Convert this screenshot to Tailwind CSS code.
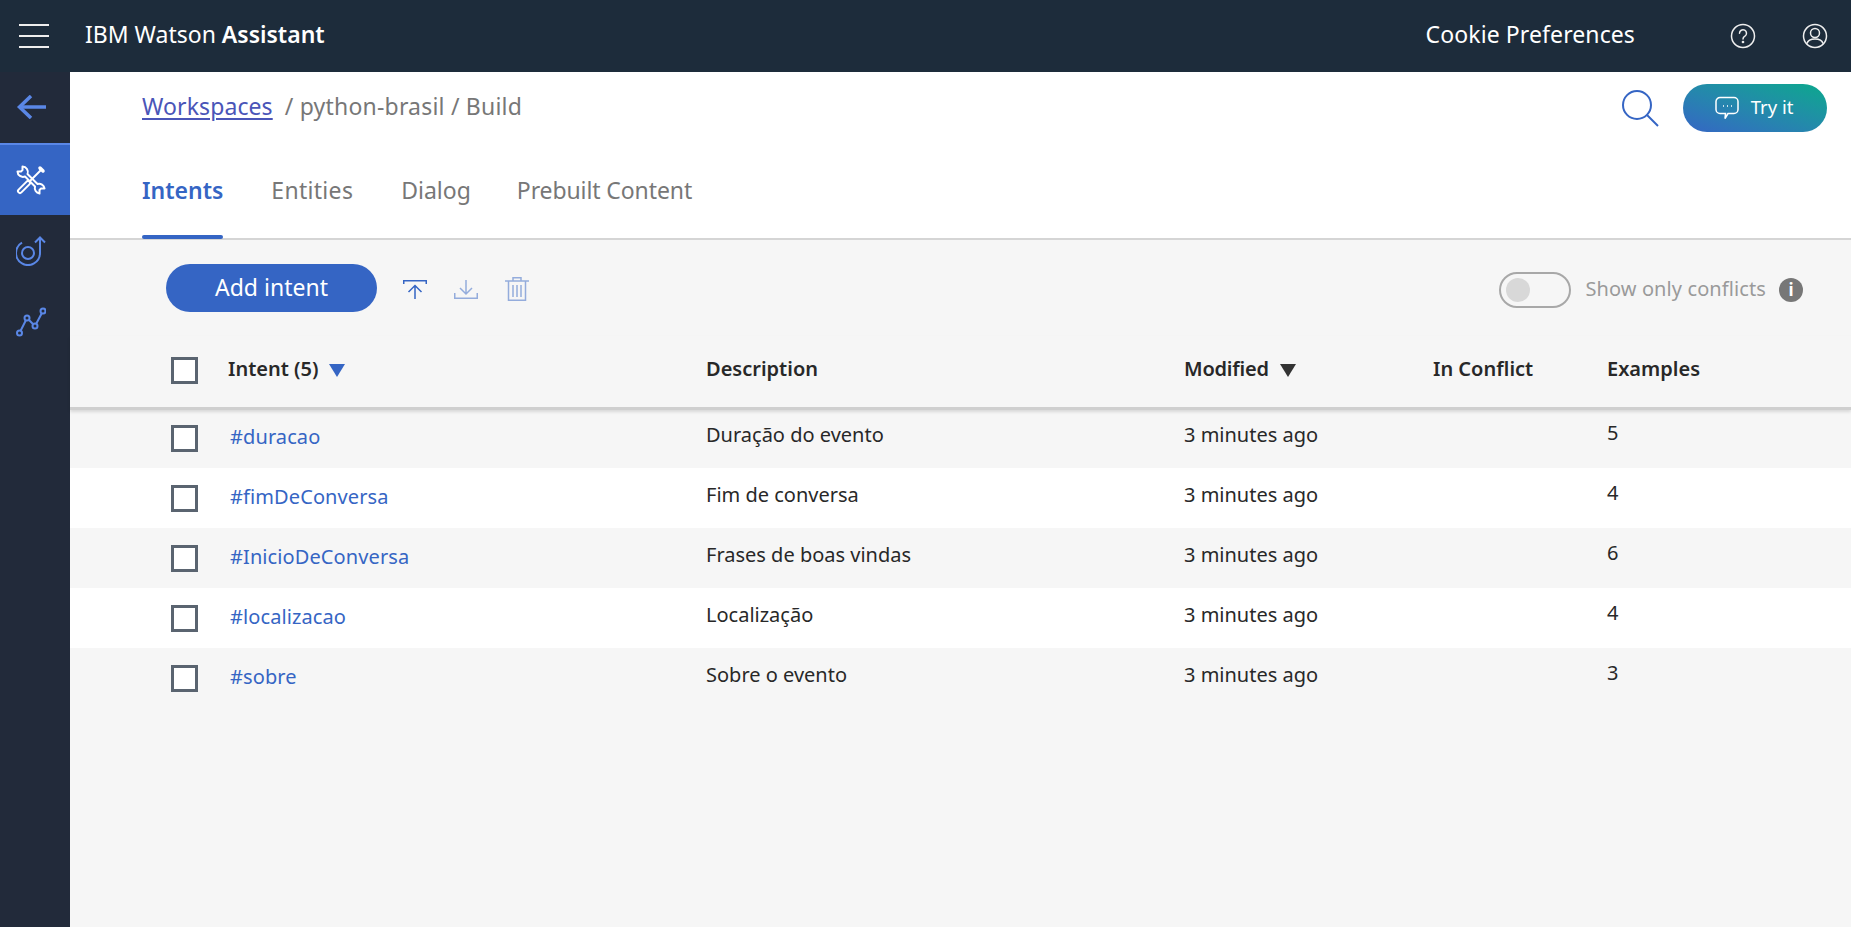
<!DOCTYPE html>
<html lang="en">
<head>
    <meta charset="UTF-8">
    <title>IBM Watson Assistant</title>
    <script src="https://cdn.jsdelivr.net/npm/@tailwindcss/browser@4"></script>
</head>
<body class="h-[927px] overflow-hidden flex flex-col bg-[#f6f6f6] font-['Noto_Sans',sans-serif] text-[#282828]">
    <!-- top bar -->
    <header class="h-[72px] shrink-0 bg-[#1d2c3b] flex items-center text-white">
        <div class="w-[85px] pl-[19px]">
            <div class="w-[30px] flex flex-col gap-[9px]">
                <div class="h-[2px] bg-[#eee]"></div>
                <div class="h-[2px] bg-[#eee]"></div>
                <div class="h-[2px] bg-[#eee]"></div>
            </div>
        </div>
        <div class="text-[23px] mb-[4px]">IBM Watson <span class="font-semibold">Assistant</span></div>
        <div class="ml-auto text-[23px] tracking-[0.1px] mr-[95px] mb-[3px]">Cookie Preferences</div>
        <svg class="w-[26px] h-[26px] mr-[46px]" viewBox="0 0 26 26" fill="none" stroke="#eee" stroke-width="1.5">
            <circle cx="13" cy="13" r="11.5"/>
            <path d="M9.5 10.2a3.5 3.5 0 1 1 5.4 3c-1.3.8-1.9 1.5-1.9 2.8" stroke-linecap="round"/>
            <circle cx="13" cy="19" r="0.6" fill="#eee"/>
        </svg>
        <svg class="w-[26px] h-[26px] mr-[23px]" viewBox="0 0 26 26" fill="none" stroke="#eee" stroke-width="1.5">
            <circle cx="13" cy="13" r="11.5"/>
            <circle cx="13" cy="10" r="4.5"/>
            <path d="M5 20.5c1-3.6 4-4.5 8-4.5s7 .9 8 4.5"/>
        </svg>
    </header>

    <div class="flex flex-1 min-h-0">
        <!-- side nav -->
        <aside class="w-[70px] shrink-0 bg-[#222a3a] flex flex-col">
            <div class="h-[71px] flex items-center justify-center pr-[8px] pb-[1px]">
                <svg class="w-[30px] h-[24px]" viewBox="0 0 30 24" fill="none" stroke="#5a87e6" stroke-width="3.500">
                    <path d="M30 12H3"/>
                    <path d="M15 1L3.500 12 15 23"/>
                </svg>
            </div>
            <div class="h-[72px] bg-[#3565c4] border-t-2 border-[#5a87e6] flex items-center justify-center pr-[8px]">
                <svg class="w-[30px] h-[30px]" viewBox="0 0 30 30" fill="none" stroke="#fff" stroke-width="2">
                    <path d="M6.500 1.500L6.500 5 5 6.500 1.500 6.500A5.500 5.500 0 0 0 9 11.500L19 21.500A5.500 5.500 0 0 0 23.500 28.500L23.500 25 25 23.500 28.500 23.500A5.500 5.500 0 0 0 21.500 19L11.500 9A5.500 5.500 0 0 0 6.500 1.500z" stroke-linejoin="round"/>
                    <path d="M4 26L12 18" stroke-width="6" stroke-linecap="round"/>
                    <path d="M4 26L12 18" stroke="#3565c4" stroke-width="2" stroke-linecap="round"/>
                    <path d="M13 17L25 5"/>
                    <path d="M24 3L27 6" stroke-width="3.500" stroke-linecap="round"/>
                </svg>
            </div>
            <div class="h-[72px] flex items-center justify-center pr-[8px]">
                <svg class="w-[30px] h-[30px]" viewBox="0 0 30 30" fill="none" stroke="#5a87e6" stroke-width="2">
                    <circle cx="12" cy="17" r="6"/>
                    <path d="M6 6.600A12 12 0 1 0 24 17V2"/>
                    <path d="M19 6.500L24 1.500 29 6.500"/>
                </svg>
            </div>
            <div class="h-[70px] flex items-center justify-center pr-[8px]">
                <svg class="w-[30px] h-[30px]" viewBox="0 0 30 30" fill="none" stroke="#5a87e6" stroke-width="2">
                    <circle cx="3.500" cy="26" r="2.500"/>
                    <circle cx="11" cy="11" r="2.500"/>
                    <circle cx="19" cy="19" r="2.500"/>
                    <circle cx="27" cy="4" r="2.500"/>
                    <path d="M4.600 23.800L9.900 13.200M12.800 12.800L17.200 17.200M20.200 16.800L25.800 6.200"/>
                </svg>
            </div>
        </aside>

        <main class="flex-1 min-w-0 flex flex-col">
            <!-- breadcrumb + tabs -->
            <div class="h-[168px] shrink-0 bg-white border-b-2 border-[#d5d5d5] relative pl-[72px]">
                <div class="h-[72px] flex items-center text-[23px] text-[#777]">
                    <a class="text-[#4a55b8] tracking-[0.1px] underline underline-offset-[3px] mb-[3px]">Workspaces</a>
                    <span class="ml-[12px] tracking-[0.2px] mb-[3px]">/ python-brasil / Build</span>
                    <svg class="ml-auto w-[38px] h-[38px] mr-[24px]" viewBox="0 0 38 38" fill="none" stroke="#3565c4" stroke-width="2">
                        <circle cx="16" cy="16" r="14"/>
                        <path d="M26 26l11 11"/>
                    </svg>
                    <button class="w-[144px] h-[48px] mr-[24px] rounded-full bg-gradient-to-tr from-[#3565c4] to-[#0aa88c] text-white text-[18.5px] flex items-center justify-center gap-[12px]">
                        <svg class="w-[24px] h-[24px] -ml-[2px]" viewBox="0 0 24 24" fill="none" stroke="#fff" stroke-width="1.500">
                            <path d="M5 1.500h14a4 4 0 0 1 4 4v8a4 4 0 0 1-4 4h-6l-3 5 .500-5H5a4 4 0 0 1-4-4v-8a4 4 0 0 1 4-4z"/>
                            <path d="M8 10h1M12 10h1M16 10h1"/>
                        </svg>
                        <span class="mb-[3px]">Try it</span>
                    </button>
                </div>
                <nav class="flex gap-[48px] text-[23px] text-[#777] absolute left-[72px] bottom-0">
                    <div class="h-[96px] pt-[31px] relative text-[#3565c4] font-semibold">Intents
                        <div class="absolute left-0 right-0 bottom-[-1px] h-[4px] rounded-full bg-[#3565c4]"></div>
                    </div>
                    <div class="h-[96px] pt-[31px] tracking-[0.3px]">Entities</div>
                    <div class="h-[96px] pt-[31px]">Dialog</div>
                    <div class="h-[96px] pt-[31px] -ml-[2px] tracking-[-0.1px]">Prebuilt Content</div>
                </nav>
            </div>

            <!-- toolbar -->
            <div class="h-[96px] shrink-0 flex items-center pl-[96px] pr-[48px]">
                <button class="w-[211px] h-[48px] rounded-full bg-[#3565c4] text-white text-[23px]"><span class="block mb-[2px]">Add intent</span></button>
                <svg class="w-[24px] h-[19px] ml-[26px] mt-[3px]" viewBox="0 0 24 19" fill="none" stroke="#3565c4" stroke-width="1.500">
                    <path d="M.75 4V.75h22.500V4"/><path d="M12 19V6M5.500 12l6.500-6.500 6.500 6.500"/>
                </svg>
                <svg class="w-[24px] h-[19px] ml-[27px] mt-[3px] opacity-50" viewBox="0 0 24 19" fill="none" stroke="#3565c4" stroke-width="1.500">
                    <path d="M.75 13v5.250h22.500V13"/><path d="M12 0v13M6 8l6 6 6-6"/>
                </svg>
                <svg class="w-[24px] h-[24px] ml-[27px] mt-[2px] opacity-50" viewBox="0 0 24 24" fill="none" stroke="#3565c4" stroke-width="1.500">
                    <path d="M0 4h24M8 4V.75h8V4M3.500 4v19.250h17V4M8 8v12M12 8v12M16 8v12"/>
                </svg>
                <div class="ml-auto w-[72px] h-[36px] mt-[4px] rounded-full border-2 border-[#a8a8a8] flex items-center pl-[5px]">
                    <div class="w-[24px] h-[24px] rounded-full bg-[#d8d8d8]"></div>
                </div>
                <span class="ml-[14px] mt-[1px] text-[20px] tracking-[0.1px] text-[#9a9a9a]">Show only conflicts</span>
                <span class="ml-[13px] mt-[4px] w-[24px] h-[24px] rounded-full bg-[#777] text-white text-[17px] font-bold flex items-center justify-center">i</span>
            </div>

            <!-- table head -->
            <div class="h-[74px] pb-[2px] shrink-0 flex items-center text-[20px] font-semibold border-b-[3px] border-[#cfcfcf] shadow-[0_2px_3px_rgba(0,0,0,0.12)] relative">
                <div class="w-[158px] pl-[101px]"><div class="w-[27px] h-[27px] border-[3px] border-[#5a6470] bg-white"></div></div>
                <div class="w-[478px] flex items-center gap-[11px]"><span class="mb-[4px]">Intent (5)</span>
                    <div class="w-0 h-0 border-x-[8px] border-x-transparent border-t-[13px] border-t-[#3565c4]"></div>
                </div>
                <div class="w-[478px] mb-[4px]">Description</div>
                <div class="w-[249px] flex items-center gap-[11px]"><span class="mb-[4px] tracking-[-0.2px]">Modified</span>
                    <div class="w-0 h-0 border-x-[8px] border-x-transparent border-t-[13px] border-t-[#333]"></div>
                </div>
                <div class="w-[174px] mb-[4px]">In Conflict</div>
                <div class="mb-[4px]">Examples</div>
            </div>

            <!-- rows -->
            <div class="flex flex-col text-[20px] -mt-[2px]">
                <div class="h-[60px] flex items-center">
                    <div class="w-[160px] pl-[101px]"><div class="w-[27px] h-[27px] border-[3px] border-[#5a6470] bg-white"></div></div>
                    <div class="w-[476px] text-[#3565c4] tracking-[0.1px] mb-[2px]">#duracao</div>
                    <div class="w-[478px] mb-[7px]">Duração do evento</div>
                    <div class="w-[423px] mb-[7px]">3 minutes ago</div>
                    <div class="mb-[10px]">5</div>
                </div>
                <div class="h-[60px] flex items-center bg-white">
                    <div class="w-[160px] pl-[101px]"><div class="w-[27px] h-[27px] border-[3px] border-[#5a6470] bg-white"></div></div>
                    <div class="w-[476px] text-[#3565c4] tracking-[0.1px] mb-[2px]">#fimDeConversa</div>
                    <div class="w-[478px] mb-[7px]">Fim de conversa</div>
                    <div class="w-[423px] mb-[7px]">3 minutes ago</div>
                    <div class="mb-[10px]">4</div>
                </div>
                <div class="h-[60px] flex items-center">
                    <div class="w-[160px] pl-[101px]"><div class="w-[27px] h-[27px] border-[3px] border-[#5a6470] bg-white"></div></div>
                    <div class="w-[476px] text-[#3565c4] tracking-[0.1px] mb-[2px]">#InicioDeConversa</div>
                    <div class="w-[478px] mb-[7px]">Frases de boas vindas</div>
                    <div class="w-[423px] mb-[7px]">3 minutes ago</div>
                    <div class="mb-[10px]">6</div>
                </div>
                <div class="h-[60px] flex items-center bg-white">
                    <div class="w-[160px] pl-[101px]"><div class="w-[27px] h-[27px] border-[3px] border-[#5a6470] bg-white"></div></div>
                    <div class="w-[476px] text-[#3565c4] tracking-[0.1px] mb-[2px]">#localizacao</div>
                    <div class="w-[478px] mb-[7px]">Localização</div>
                    <div class="w-[423px] mb-[7px]">3 minutes ago</div>
                    <div class="mb-[10px]">4</div>
                </div>
                <div class="h-[60px] flex items-center">
                    <div class="w-[160px] pl-[101px]"><div class="w-[27px] h-[27px] border-[3px] border-[#5a6470] bg-white"></div></div>
                    <div class="w-[476px] text-[#3565c4] tracking-[0.1px] mb-[2px]">#sobre</div>
                    <div class="w-[478px] mb-[7px]">Sobre o evento</div>
                    <div class="w-[423px] mb-[7px]">3 minutes ago</div>
                    <div class="mb-[10px]">3</div>
                </div>
            </div>
        </main>
    </div>
</body>
</html>
